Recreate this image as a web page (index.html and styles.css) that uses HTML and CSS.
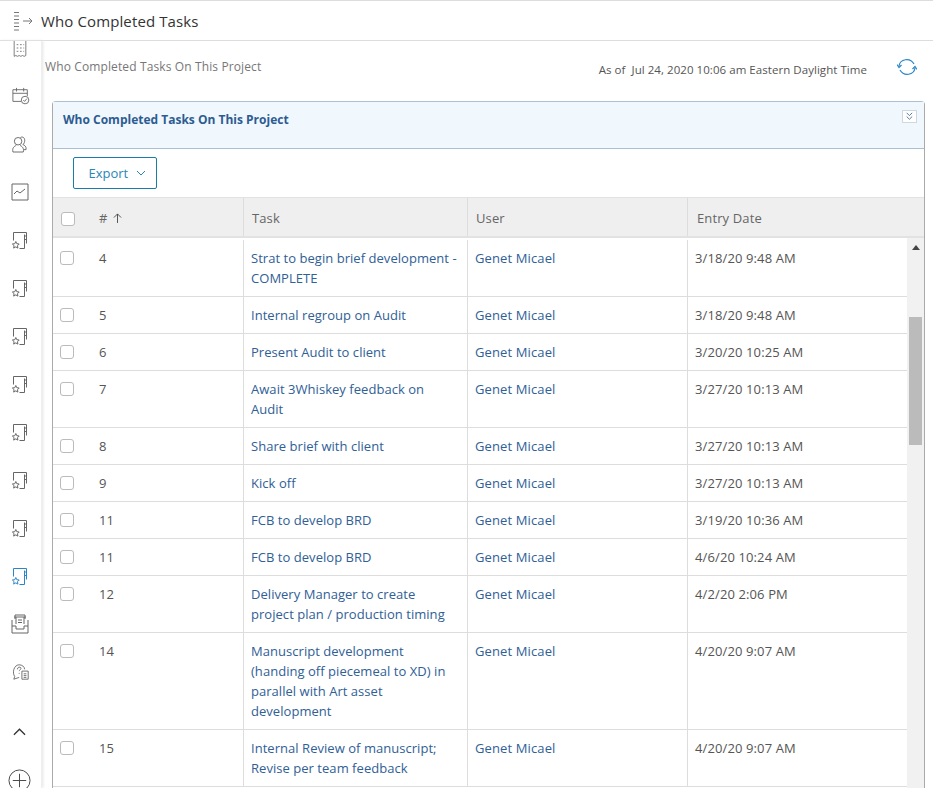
FILE: index.html
```html
<!DOCTYPE html>
<html lang="en">
<head>
    <meta charset="UTF-8">
    <title>Who Completed Tasks</title>
    <link rel="stylesheet" href="styles.css">
</head>
<body>
<svg class="defs" width="0" height="0">
    <symbol id="i-report" viewBox="0 0 15 19">
        <path d="M1.500 9.500V1.500h13v11M12.500 3.500v14h-5M14.500 5h-2M14.500 8.500h-2" />
        <path d="M3.800 10.500l1 2.200 2.400.3-1.700 1.700.4 2.400-2.100-1.200-2.100 1.200.4-2.400-1.700-1.700 2.400-.3z" />
    </symbol>
</svg>
<div id="titlebar">
    <svg class="menu-icon" viewBox="0 0 20 20">
        <path d="M0 1.500h6M0 5h6M0 8.500h6M0 12h6M0 15.500h6M0 19h6" stroke-dasharray="5 1" />
        <path d="M9 10h9M15 7l3 3-3 3" />
    </svg>
    <span class="page-name">Who Completed Tasks</span>
</div>
<div id="wrapper">
    <div id="sidebar">
        <div class="side-list">
            <div class="side-item"><svg viewBox="0 0 18 24"><path d="M2 1v21l2-1 2 1 2-1 2 1 2-1 2 1 2-1V1M2 3h14" /><path d="M5 8h2M9 8h2M13 8h1M5 12h2M9 12h2M13 12h1M5 16h2M9 16h2M13 16h1" /></svg></div>
            <div class="side-item"><svg class="wide" viewBox="0 0 20 20"><path d="M10 16H1V3h16v7M1 7h16M5 1v4M13 1v4" /><circle cx="14.500" cy="14.500" r="4.200" /><path d="M12.500 14.500l1.500 1.500 2.500-3" /></svg></div>
            <div class="side-item"><svg class="people" viewBox="0 0 16 18"><circle cx="6.500" cy="5.500" r="4" /><path d="M1 17c-1-4 1-6 3.500-7M8.500 10c2.500 1 4.500 3 3.500 7H1M9 1.500c3-1.500 5 1 4.500 4-.3 2-1 3-2 3.500 2 .8 4 2 3.500 5.500h-2.500" /></svg></div>
            <div class="side-item"><svg viewBox="0 0 18 18"><path d="M1 1h16v16H1z" /><path d="M3 11l3-3 3 2 5-4" /></svg></div>
            <div class="side-item"><svg class="doc" viewBox="0 0 15 19"><use href="#i-report" /></svg></div>
            <div class="side-item"><svg class="doc" viewBox="0 0 15 19"><use href="#i-report" /></svg></div>
            <div class="side-item"><svg class="doc" viewBox="0 0 15 19"><use href="#i-report" /></svg></div>
            <div class="side-item"><svg class="doc" viewBox="0 0 15 19"><use href="#i-report" /></svg></div>
            <div class="side-item"><svg class="doc" viewBox="0 0 15 19"><use href="#i-report" /></svg></div>
            <div class="side-item"><svg class="doc" viewBox="0 0 15 19"><use href="#i-report" /></svg></div>
            <div class="side-item"><svg class="doc" viewBox="0 0 15 19"><use href="#i-report" /></svg></div>
            <div class="side-item active"><svg class="doc" viewBox="0 0 15 19"><use href="#i-report" /></svg></div>
            <div class="side-item"><svg viewBox="0 0 18 20"><path d="M4 5V1h10v4M3 3h12M1 6v13h16V6M1 12h4v3h8v-3h4M5 10V3M13 10V3M7 6h4M7 8.500h4" /></svg></div>
            <div class="side-item"><svg class="wide" viewBox="0 0 20 20"><path d="M2 18l1-3c-3-4-1-13 5-13 3 0 6 2 6 5M2 18l6-2" /><path d="M6 7c0-3 4-3 4-1 0 1-2 2-2 3M8 11v1" /><path d="M11 9h7v9h-7zM13 12h3M13 14h3M13 16h3" /></svg></div>
            <div class="side-item up"><svg viewBox="0 0 14 8"><path d="M1 7l6-6 6 6" /></svg></div>
            <div class="side-item plus"><svg viewBox="0 0 24 24"><circle cx="12" cy="12" r="11" /><path d="M12 5v14M5 12h14" /></svg></div>
        </div>
    </div>
    <div id="content">
        <div class="info-row">
            <span class="sub-title">Who Completed Tasks On This Project</span>
            <span class="as-of">As of &nbsp;Jul 24, 2020 10:06 am Eastern Daylight Time</span>
            <svg class="refresh" viewBox="0 0 20 18"><path d="M2 8c1-7 11-9 15-2M18 10c-1 7-11 9-15 2" /><path d="M0 6.500l2 3 2.500-2.500M15.500 11l2.500-2.500 2 3" /></svg>
        </div>
        <div class="panel">
            <div class="panel-head">
                <span class="panel-title">Who Completed Tasks On This Project</span>
                <span class="collapse"><svg viewBox="0 0 14 12"><path d="M4 2l3 3 3-3M4 6l3 3 3-3" /></svg></span>
            </div>
            <div class="toolbar">
                <button class="export">Export <svg viewBox="0 0 10 6"><path d="M1 1l4 4 4-4" /></svg></button>
            </div>
            <div class="head-row">
                <div class="cell c-check"><span class="check"></span></div>
                <div class="cell c-num"># <svg class="sort" viewBox="0 0 10 11"><path d="M5 11V1M1 5l4-4 4 4" /></svg></div>
                <div class="cell c-task">Task</div>
                <div class="cell c-user">User</div>
                <div class="cell c-date">Entry Date</div>
            </div>
            <div class="table-body">
                <div class="rows">
                    <div class="row">
                        <div class="cell c-check"><span class="check"></span></div>
                        <div class="cell c-num">4</div>
                        <div class="cell c-task"><a>Strat to begin brief development - COMPLETE</a></div>
                        <div class="cell c-user"><a>Genet Micael</a></div>
                        <div class="cell c-date">3/18/20 9:48 AM</div>
                    </div>
                    <div class="row">
                        <div class="cell c-check"><span class="check"></span></div>
                        <div class="cell c-num">5</div>
                        <div class="cell c-task"><a>Internal regroup on Audit</a></div>
                        <div class="cell c-user"><a>Genet Micael</a></div>
                        <div class="cell c-date">3/18/20 9:48 AM</div>
                    </div>
                    <div class="row">
                        <div class="cell c-check"><span class="check"></span></div>
                        <div class="cell c-num">6</div>
                        <div class="cell c-task"><a>Present Audit to client</a></div>
                        <div class="cell c-user"><a>Genet Micael</a></div>
                        <div class="cell c-date">3/20/20 10:25 AM</div>
                    </div>
                    <div class="row">
                        <div class="cell c-check"><span class="check"></span></div>
                        <div class="cell c-num">7</div>
                        <div class="cell c-task"><a>Await 3Whiskey feedback on Audit</a></div>
                        <div class="cell c-user"><a>Genet Micael</a></div>
                        <div class="cell c-date">3/27/20 10:13 AM</div>
                    </div>
                    <div class="row">
                        <div class="cell c-check"><span class="check"></span></div>
                        <div class="cell c-num">8</div>
                        <div class="cell c-task"><a>Share brief with client</a></div>
                        <div class="cell c-user"><a>Genet Micael</a></div>
                        <div class="cell c-date">3/27/20 10:13 AM</div>
                    </div>
                    <div class="row">
                        <div class="cell c-check"><span class="check"></span></div>
                        <div class="cell c-num">9</div>
                        <div class="cell c-task"><a>Kick off</a></div>
                        <div class="cell c-user"><a>Genet Micael</a></div>
                        <div class="cell c-date">3/27/20 10:13 AM</div>
                    </div>
                    <div class="row">
                        <div class="cell c-check"><span class="check"></span></div>
                        <div class="cell c-num">11</div>
                        <div class="cell c-task"><a>FCB to develop BRD</a></div>
                        <div class="cell c-user"><a>Genet Micael</a></div>
                        <div class="cell c-date">3/19/20 10:36 AM</div>
                    </div>
                    <div class="row">
                        <div class="cell c-check"><span class="check"></span></div>
                        <div class="cell c-num">11</div>
                        <div class="cell c-task"><a>FCB to develop BRD</a></div>
                        <div class="cell c-user"><a>Genet Micael</a></div>
                        <div class="cell c-date">4/6/20 10:24 AM</div>
                    </div>
                    <div class="row">
                        <div class="cell c-check"><span class="check"></span></div>
                        <div class="cell c-num">12</div>
                        <div class="cell c-task"><a>Delivery Manager to create project plan / production timing</a></div>
                        <div class="cell c-user"><a>Genet Micael</a></div>
                        <div class="cell c-date">4/2/20 2:06 PM</div>
                    </div>
                    <div class="row">
                        <div class="cell c-check"><span class="check"></span></div>
                        <div class="cell c-num">14</div>
                        <div class="cell c-task"><a>Manuscript development (handing off piecemeal to XD) in parallel with Art asset development</a></div>
                        <div class="cell c-user"><a>Genet Micael</a></div>
                        <div class="cell c-date">4/20/20 9:07 AM</div>
                    </div>
                    <div class="row">
                        <div class="cell c-check"><span class="check"></span></div>
                        <div class="cell c-num">15</div>
                        <div class="cell c-task"><a>Internal Review of manuscript; Revise per team feedback</a></div>
                        <div class="cell c-user"><a>Genet Micael</a></div>
                        <div class="cell c-date">4/20/20 9:07 AM</div>
                    </div>
                </div>
                <div class="scrollbar">
                    <span class="arrow"></span>
                    <div class="thumb"></div>
                </div>
            </div>
        </div>
    </div>
</div>
</body>
</html>
```

FILE: styles.css
```css
* {
    box-sizing: border-box;
}
html, body {
    height: 100%;
    margin: 0;
    overflow: hidden;
}
body {
    background-color: white;
    color: #555;
    font-family: "Open Sans", sans-serif;
    font-size: 13px;
    letter-spacing: 0.12px;
    display: flex;
    flex-direction: column;
}
svg {
    fill: none;
    stroke: currentColor;
    stroke-width: 1;
}
.defs {
    position: absolute;
}
#titlebar {
    height: 41px;
    flex: none;
    border-top: 1px solid #ddd;
    border-bottom: 1px solid #ddd;
    display: flex;
    align-items: center;
    padding-left: 14px;
    color: #777;
}
.menu-icon {
    width: 20px;
    height: 20px;
    margin-right: 7px;
}
.page-name {
    font-size: 15px;
    color: #333;
}
#wrapper {
    flex: 1;
    display: flex;
    min-height: 0;
}
#sidebar {
    width: 42px;
    flex: none;
    overflow: hidden;
    border-right: 1px solid #eee;
    box-shadow: 1px 0 3px #e4e4e4;
    color: #666;
}
.side-list {
    margin-top: -17px;
}
.side-item {
    height: 48px;
    display: flex;
    align-items: center;
    justify-content: center;
    padding-right: 2px;
}
.side-item svg {
    width: 18px;
    height: 20px;
}
.side-item svg.doc {
    width: 15px;
    height: 19px;
}
.side-item svg.wide {
    margin-left: 2px;
}
.side-item svg.people {
    width: 15px;
    height: 17px;
}
.side-item.active {
    color: #2a86c8;
}
.side-item.up {
    margin-top: 12px;
    color: #333;
}
.side-item.up svg {
    width: 13px;
    height: 8px;
    stroke-width: 1.400;
}
.side-item.plus {
    color: #444;
}
.side-item.plus svg {
    width: 23px;
    height: 23px;
}
#content {
    flex: 1;
    min-width: 0;
    padding-left: 3px;
}
.info-row {
    height: 60px;
    display: flex;
    align-items: flex-start;
    font-size: 11.500px;
    padding-right: 16px;
}
.sub-title {
    font-size: 12px;
    color: #777;
    padding-top: 17px;
}
.as-of {
    margin-left: auto;
    padding-top: 21px;
    color: #555;
    letter-spacing: 0.05px;
}
.refresh {
    width: 20px;
    height: 18px;
    margin: 17px 0 0 30px;
    color: #2a86c8;
    stroke-width: 1.200;
}
.panel {
    margin-left: 7px;
    width: 873px;
    border: 1px solid #a9c1d3;
    border-bottom: 0;
    border-radius: 4px 4px 0 0;
    border-right-color: #aaa;
    border-left-color: #aaa;
}
.panel-head {
    height: 47px;
    background-color: #f1f8fd;
    border-bottom: 1px solid #a9c1d3;
    padding: 9px 7px 9px 10px;
    display: flex;
    justify-content: space-between;
    align-items: flex-start;
}
.panel-title {
    font-weight: bold;
    font-size: 12px;
    letter-spacing: 0;
    color: #2d5c92;
}
.collapse {
    width: 15px;
    height: 13px;
    border: 1px solid #cfd8e0;
    color: #4a6f96;
    display: flex;
    margin-top: -1px;
    background-color: white;
}
.toolbar {
    height: 48px;
    padding: 8px 20px;
}
.export {
    width: 84px;
    height: 32px;
    background-color: white;
    border: 1px solid #1a7ca8;
    border-radius: 2px;
    color: #2a86b5;
    font-family: inherit;
    font-size: 13px;
    padding: 0 0 0 4px;
}
.export svg {
    width: 10px;
    height: 6px;
    margin-left: 4px;
    vertical-align: 2px;
}
.head-row {
    height: 41px;
    display: flex;
    background-color: #efefef;
    border-top: 1px solid #e2e2e2;
    border-bottom: 2px solid #e2e2e2;
    color: #666;
}
.head-row .cell {
    padding-top: 10px;
    padding-left: 8px;
}
.head-row .c-check {
    padding-top: 12px;
}
.head-row .c-num {
    padding-left: 14px;
}
.head-row .c-date {
    padding-left: 9px;
}
.cell {
    padding: 8px 8px 8px 7px;
    line-height: 20px;
    flex: none;
}
.c-check {
    width: 32px;
}
.row .c-check {
    padding-left: 7px;
}
.c-num {
    width: 158px;
    padding-left: 14px;
}
.c-task {
    width: 224px;
    border-left: 1px solid #ddd;
}
.row .c-task {
    letter-spacing: 0.04px;
}
.c-user {
    width: 220px;
    border-left: 1px solid #ddd;
}
.c-date {
    flex: 1;
    border-left: 1px solid #ddd;
}
.check {
    display: block;
    width: 14px;
    height: 14px;
    margin-top: 3px;
    border: 1px solid #bbb;
    border-radius: 3px;
    background-color: white;
}
.head-row .check {
    margin-top: 2px;
}
.sort {
    width: 9px;
    height: 10px;
    color: #444;
    margin-left: 2px;
}
.table-body {
    display: flex;
    align-items: flex-start;
}
.rows {
    width: 854px;
    flex: none;
    padding-top: 2px;
}
.row {
    display: flex;
    border-bottom: 1px solid #ddd;
}
.row a {
    color: #2f6096;
}
.scrollbar {
    flex: 1;
    height: 560px;
    background-color: #f1f1f1;
    padding: 7px 2px 0;
}
.arrow {
    display: block;
    width: 0;
    margin: 0 auto;
    border-left: 4px solid transparent;
    border-right: 4px solid transparent;
    border-bottom: 5px solid #444;
}
.thumb {
    height: 128px;
    margin-top: 67px;
    background-color: #bbb;
}
```
